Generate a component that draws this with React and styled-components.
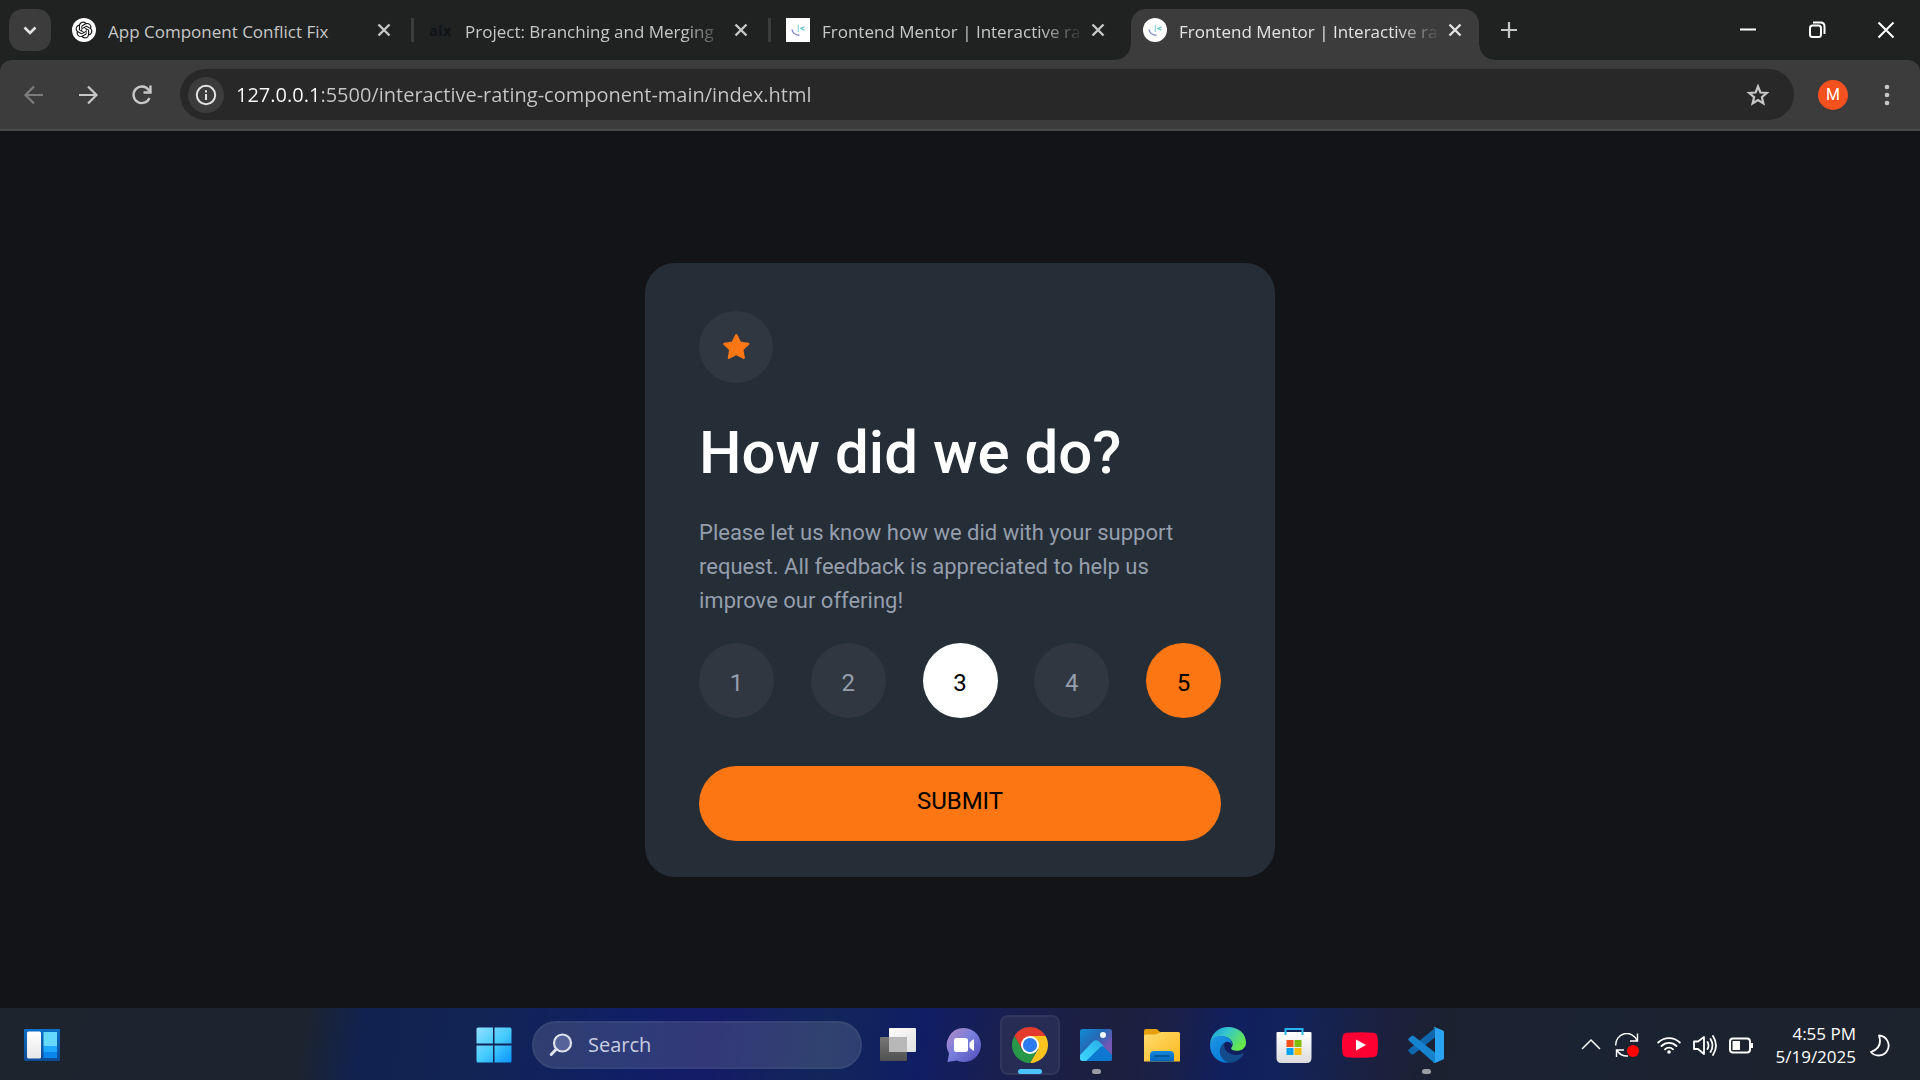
import React, { useState } from "react";
import styled, { createGlobalStyle, css } from "styled-components";

const uiFont = `"Open Sans", "Noto Sans", sans-serif`;
const cardFont = `Roboto, "Liberation Sans", sans-serif`;

const GlobalStyle = createGlobalStyle`
  *, *::before, *::after { box-sizing: border-box; }
  body { margin: 0; background: #121417; font-family: ${uiFont}; }
  button, input { font: inherit; }
  svg { display: block; flex: none; }
`;

const Screen = styled.div`
  display: flex;
  flex-direction: column;
  min-height: 100vh;
`;

/* ---------- browser chrome ---------- */

const TabStrip = styled.header`
  display: flex;
  align-items: center;
  height: 60px;
  padding-left: 9px;
  background: #202222;
  color: #c7c7c7;
`;

const BareButton = styled.button`
  display: grid;
  place-items: center;
  flex: none;
  width: ${(p) => p.$w}px;
  height: ${(p) => p.$h || p.$w}px;
  padding: 0;
  border: 0;
  border-radius: ${(p) => p.$round || 0}px;
  background: ${(p) => p.$bg || "transparent"};
  color: ${(p) => p.$color || "inherit"};
`;

const TabList = styled.div`
  display: flex;
  align-self: stretch;
  align-items: center;
  padding: 9px 0 0 9px;
  min-width: 0;
`;

const Tab = styled.div`
  position: relative;
  display: flex;
  align-items: center;
  gap: 12px;
  width: 348px;
  min-width: 0;
  height: 51px;
  padding: 0 12px 9px;
  border-radius: 15px 15px 0 0;
  color: #c7c7c7;
  ${(p) =>
    p.$active &&
    css`
      background: #3c3c3c;
      color: #e3e3e3;
      &::before,
      &::after {
        content: "";
        position: absolute;
        bottom: 0;
        width: 15px;
        height: 15px;
      }
      &::before {
        right: 100%;
        background: radial-gradient(circle at 0 0, transparent 14px, #3c3c3c 15px);
      }
      &::after {
        left: 100%;
        background: radial-gradient(circle at 100% 0, transparent 14px, #3c3c3c 15px);
      }
    `}
`;

const TabTitle = styled.button`
  flex: 1;
  min-width: 0;
  margin-right: -10px;
  padding: 4px 0 0;
  border: 0;
  background: none;
  color: inherit;
  font-size: 17px;
  line-height: 24px;
  text-align: left;
  white-space: nowrap;
  overflow: hidden;
  ${(p) => p.$faded && css`mask-image: linear-gradient(to right, #000 calc(100% - 44px), transparent);`}
`;

const Separator = styled.span`
  display: flex;
  justify-content: center;
  width: 9px;
  height: 24px;
  margin-bottom: 9px;
  &::before {
    content: "";
    width: 3px;
    background: ${(p) => (p.$hidden ? "transparent" : "#3c3c3c")};
  }
`;

const AlxMark = styled.span`
  width: 24px;
  color: #111417;
  font-size: 15px;
  font-weight: 700;
  line-height: 24px;
`;

const WindowControls = styled.div`
  display: flex;
  margin-left: auto;
  color: #fff;
`;

const ToolbarBack = styled.div`
  background: #202222;
`;

const Toolbar = styled.nav`
  display: flex;
  align-items: center;
  height: 71px;
  padding: 0 9px 0 7px;
  border-bottom: 2px solid #484848;
  border-radius: 12px 12px 0 0;
  background: #3c3c3c;
  color: #c7c7c7;
`;

const Omnibox = styled.label`
  display: flex;
  flex: 1;
  align-items: center;
  gap: 12px;
  height: 51px;
  margin: 0 9px 0 11px;
  padding: 0 18px 0 8px;
  border-radius: 26px;
  background: #282828;
`;

const Address = styled.input`
  flex: 1;
  min-width: 0;
  padding: 0;
  border: 0;
  outline: 0;
  background: linear-gradient(to right, #fff 83px, #c7c7c7 83px);
  background-clip: text;
  color: transparent;
  font-size: 20px;
  line-height: 30px;
`;

const Avatar = styled.span`
  display: grid;
  place-items: center;
  width: 30px;
  height: 30px;
  border-radius: 50%;
  background: #f4511e;
  color: #fff;
  font: 16px/30px Roboto, sans-serif;
`;

/* ---------- rating card ---------- */

const Page = styled.main`
  display: grid;
  flex: 1;
  place-items: center;
  padding: 24px;
`;

const Card = styled.form`
  width: 100%;
  max-width: 630px;
  padding: 48px 54px 36px;
  border-radius: 30px;
  background: #252d37;
  color: #959eac;
  font-family: ${cardFont};
  font-size: 22px;
`;

const StarBadge = styled.div`
  display: grid;
  place-items: center;
  width: 74px;
  height: 72px;
  border-radius: 50%;
  background: #313740;
`;

const Heading = styled.h1`
  margin: 34px 0 27px;
  color: #fff;
  font-size: 60px;
  font-weight: 500;
  line-height: 72px;
`;

const Message = styled.p`
  margin: 0;
  line-height: 34px;
`;

const Ratings = styled.fieldset`
  display: flex;
  justify-content: space-between;
  min-width: 0;
  margin: 25px 0 48px;
  padding: 0;
  border: 0;
`;

const Rating = styled.label`
  display: grid;
  place-items: center;
  width: 75px;
  height: 75px;
  padding-top: 5px;
  border-radius: 50%;
  background: #313740;
  color: #959eac;
  font-size: 24px;
  line-height: 30px;
  ${(p) => p.$hovered && css`background: #fff; color: #000;`}
  &:has(input:checked) {
    background: #fc7614;
    color: #000;
  }
`;

const HiddenRadio = styled.input`
  position: absolute;
  opacity: 0;
  pointer-events: none;
`;

const Submit = styled.button`
  width: 100%;
  height: 75px;
  padding: 0 0 5px;
  border: 0;
  border-radius: 38px;
  background: #fc7614;
  color: #000;
  font-size: 24px;
`;

/* ---------- taskbar ---------- */

const Taskbar = styled.footer`
  display: grid;
  grid-template-columns: 1fr auto 1fr;
  align-items: center;
  height: 72px;
  padding-top: 2px;
  background: linear-gradient(
    100deg,
    #1e242e 0%,
    #1c2430 16%,
    #112250 19%,
    #122454 25%,
    #101f66 33%,
    #151b66 37%,
    #12265a 43%,
    #101d64 48%,
    #191f50 52%,
    #1c203e 58%,
    #1a2048 61%,
    #101f5e 64%,
    #12235a 67%,
    #1a2142 71%,
    #1c2130 75%,
    #1a2332 82%,
    #1d232d 100%
  );
  color: #fff;
`;

const TaskStart = styled.div`
  padding: 0 24px;
`;

const TaskCenter = styled.div`
  display: flex;
  align-items: center;
`;

const TaskButton = styled.button`
  display: grid;
  place-items: center;
  width: 60px;
  height: 60px;
  margin: 0 3px;
  padding: 0;
  border: 2px solid ${(p) => (p.$active ? "#31365c" : "transparent")};
  border-radius: 8px;
  background: ${(p) => (p.$active ? "#272c54" : "transparent")};
  position: relative;
  &::after {
    content: "";
    position: absolute;
    bottom: -1px;
    width: ${(p) => (p.$active ? 24 : p.$open ? 9 : 0)}px;
    height: 5px;
    border-radius: 3px;
    background: ${(p) => (p.$active ? "#4cc2ff" : "#9a9ba3")};
  }
`;

const SearchBox = styled.label`
  display: flex;
  align-items: center;
  gap: 15px;
  width: 330px;
  height: 48px;
  margin: 0 3px 0 5px;
  padding: 0 15px;
  border: 2px solid rgba(255, 255, 255, 0.04);
  border-radius: 24px;
  background: rgba(255, 255, 255, 0.13);
`;

const SearchInput = styled.input`
  flex: 1;
  min-width: 0;
  padding: 0;
  border: 0;
  outline: 0;
  background: none;
  color: #fff;
  font-size: 20px;
  line-height: 30px;
  &::placeholder {
    color: #c9cde0;
    opacity: 1;
  }
`;

const Tray = styled.div`
  display: flex;
  align-items: center;
  justify-content: flex-end;
  gap: 12px;
  padding-right: 28px;
`;

const TrayGap = styled.span`
  display: flex;
  padding-right: 6px;
`;

const Clock = styled.time`
  width: 91px;
  font-size: 17px;
  line-height: 23px;
  text-align: right;
  white-space: nowrap;
`;

/* ---------- drawings ---------- */

const Line = ({ size = 24, box = 24, w = 2, children, cap = "butt" }) => (
  <svg width={size} height={size} viewBox={`0 0 ${box} ${box}`} fill="none" stroke="currentColor" strokeWidth={w} strokeLinecap={cap} aria-hidden="true">
    {children}
  </svg>
);

const CloseMark = () => (
  <Line w={2.4}><path d="M6.5 6.5 17.5 17.5M17.5 6.5 6.5 17.5" /></Line>
);

const OpenAiIcon = () => (
  <svg width="24" height="24" viewBox="0 0 24 24" aria-hidden="true">
    <circle cx="12" cy="12" r="12" fill="#fff" />
    <g transform="translate(3.6 3.6) scale(.7)">
      <path fill="#111" d="M22.2819 9.8211a5.9847 5.9847 0 0 0-.5157-4.9108 6.0462 6.0462 0 0 0-6.5098-2.9A6.0651 6.0651 0 0 0 4.9807 4.1818a5.9847 5.9847 0 0 0-3.9977 2.9 6.0462 6.0462 0 0 0 .7427 7.0966 5.98 5.98 0 0 0 .511 4.9107 6.051 6.051 0 0 0 6.5146 2.9001A5.9847 5.9847 0 0 0 13.2599 24a6.0557 6.0557 0 0 0 5.7718-4.2058 5.9894 5.9894 0 0 0 3.9977-2.9001 6.0557 6.0557 0 0 0-.7475-7.073zm-9.022 12.6081a4.4755 4.4755 0 0 1-2.8764-1.0408l.1419-.0804 4.7783-2.7582a.7948.7948 0 0 0 .3927-.6813v-6.7369l2.02 1.1686a.071.071 0 0 1 .038.052v5.5826a4.504 4.504 0 0 1-4.4945 4.4944zm-9.6607-4.1254a4.4708 4.4708 0 0 1-.5346-3.0137l.142.0852 4.783 2.7582a.7712.7712 0 0 0 .7806 0l5.8428-3.3685v2.3324a.0804.0804 0 0 1-.0332.0615L9.74 19.9502a4.4992 4.4992 0 0 1-6.1408-1.6464zM2.3408 7.8956a4.485 4.485 0 0 1 2.3655-1.9728V11.6a.7664.7664 0 0 0 .3879.6765l5.8144 3.3543-2.0201 1.1685a.0757.0757 0 0 1-.071 0l-4.8303-2.7865A4.504 4.504 0 0 1 2.3408 7.872zm16.5963 3.8558L13.1038 8.364 15.1192 7.2a.0757.0757 0 0 1 .071 0l4.8303 2.7913a4.4944 4.4944 0 0 1-.6765 8.1042v-5.6772a.79.79 0 0 0-.407-.667zm2.0107-3.0231l-.142-.0852-4.7735-2.7818a.7759.7759 0 0 0-.7854 0L9.409 9.2297V6.8974a.0662.0662 0 0 1 .0284-.0615l4.8303-2.7866a4.4992 4.4992 0 0 1 6.6802 4.66zM8.3065 12.863l-2.02-1.1638a.0804.0804 0 0 1-.038-.0567V6.0742a4.4992 4.4992 0 0 1 7.3757-3.4537l-.142.0805L8.704 5.459a.7948.7948 0 0 0-.3927.6813zm1.0976-2.3654l2.602-1.4998 2.6069 1.4998v2.9994l-2.5974 1.4997-2.6067-1.4997Z" />
    </g>
  </svg>
);

const MentorIcon = ({ round }) => (
  <svg width="24" height="24" viewBox="0 0 24 24" fill="none" aria-hidden="true">
    <rect width="24" height="24" rx={round ? 12 : 0} fill="#fff" />
    <path d="M6 11.5c.5 3 3.5 5.5 7.5 5.8" stroke="#7b87c9" strokeWidth="1.4" />
    <path d="M12.3 7v7" stroke="#8fd3dc" strokeWidth="1.2" />
    <path d="m18.5 8.7-3.6 1.8 3.6 1.8" stroke="#5cc0d0" strokeWidth="1.2" />
  </svg>
);

const WidgetsIcon = () => (
  <svg width="36" height="32" viewBox="0 0 36 32" aria-hidden="true">
    <defs>
      <linearGradient id="wdg" x2="0" y2="1"><stop stopColor="#0a70c8" /><stop offset="1" stopColor="#0d4b94" /></linearGradient>
      <linearGradient id="wdw" x2="0" y2="1"><stop stopColor="#fff" /><stop offset="1" stopColor="#e6e6e8" /></linearGradient>
    </defs>
    <rect width="36" height="32" rx="1" fill="url(#wdg)" />
    <rect x="3" y="2.500" width="14" height="27" rx="1.500" fill="url(#wdw)" />
    <path fill="#66d9ff" d="M19.500 3H33v14H19.500z" />
    <path fill="#1ea8ff" d="M19.500 17H33v6H19.500z" />
    <path fill="#0a86ee" d="M19.500 23H33v6H19.500z" />
  </svg>
);

const WindowsIcon = () => (
  <svg width="36" height="36" viewBox="0 0 36 36" aria-hidden="true">
    <defs><linearGradient id="win" x2="1" y2="1"><stop stopColor="#8fe0ff" /><stop offset=".5" stopColor="#48ccff" /><stop offset="1" stopColor="#0a94fb" /></linearGradient></defs>
    <path fill="url(#win)" d="M2 .5h15v16H.5V2A1.500 1.500 0 0 1 2 .5zM18.500.5H34A1.500 1.500 0 0 1 35.500 2v14.500h-17zM.5 18.500H17v17H2A1.500 1.500 0 0 1 .5 34zM18.500 18.500h17V34a1.500 1.500 0 0 1-1.500 1.500H18.500z" />
  </svg>
);

const TaskViewIcon = () => (
  <svg width="36" height="36" viewBox="0 0 36 36" aria-hidden="true">
    <defs>
      <linearGradient id="tvf" x2="1" y2="1"><stop stopColor="#fff" /><stop offset="1" stopColor="#e0e0e0" /></linearGradient>
      <linearGradient id="tvb" x2="0" y2="1"><stop stopColor="#777" /><stop offset="1" stopColor="#505050" /></linearGradient>
    </defs>
    <rect y="10" width="27" height="24" rx="1" fill="url(#tvb)" />
    <rect x="9" y="1" width="27" height="24" rx="1" fill="url(#tvf)" />
    <path fill="#b8b8b8" d="M9 10h18v15H9z" />
  </svg>
);

const ChatIcon = () => (
  <svg width="36" height="36" viewBox="0 0 36 36" aria-hidden="true">
    <defs><linearGradient id="cht" x2="1" y2="1"><stop stopColor="#b48ac0" /><stop offset=".45" stopColor="#7a7fdd" /><stop offset="1" stopColor="#4f4bb8" /></linearGradient></defs>
    <path fill="url(#cht)" d="M18 1a17 17 0 1 1-7 32.500L1.500 35 3 26.500A17 17 0 0 1 18 1z" />
    <rect x="8" y="11" width="14" height="14" rx="2.500" fill="#fff" />
    <path fill="#fff" d="m23.500 15.500 3.500-3q1-.6 1 .8v9.400q0 1.400-1 .8l-3.500-3z" />
  </svg>
);

const ChromeIcon = () => (
  <svg width="36" height="36" viewBox="0 0 48 48" aria-hidden="true">
    <path fill="#e33b2e" d="M24 12h20.780A24 24 0 0 0 3.220 12l10.390 18z" />
    <path fill="#fcc31e" d="M34.390 30 24 48A24 24 0 0 0 44.780 12H24z" />
    <path fill="#279847" d="M13.610 30 3.220 12A24 24 0 0 0 24 48l10.390-18z" />
    <circle cx="24" cy="24" r="12" fill="#fff" />
    <circle cx="24" cy="24" r="9.500" fill="#2a7cf0" />
  </svg>
);

const PhotosIcon = () => (
  <svg width="32" height="32" viewBox="0 0 32 32" aria-hidden="true">
    <defs>
      <linearGradient id="phb" x2="1" y2="1"><stop stopColor="#118bd6" /><stop offset=".4" stopColor="#2569b5" /><stop offset=".7" stopColor="#7658b5" /></linearGradient>
      <linearGradient id="phm" x1="1" y1="0" x2="0" y2="1"><stop stopColor="#27aee8" /><stop offset="1" stopColor="#40d7ff" /></linearGradient>
      <clipPath id="phc"><rect width="32" height="32" rx="2.500" /></clipPath>
    </defs>
    <g clipPath="url(#phc)">
      <path fill="url(#phb)" d="M0 0h32v32H0z" />
      <path fill="#0c78d0" d="m22 16 12 12v6H2z" />
      <path fill="url(#phm)" d="M0 26 13 12.500q3-2.500 6 0l5 5q-2-.6-4 1L6 32q-3 1-6-1z" />
      <circle cx="23" cy="6" r="3" fill="#f4fbff" />
    </g>
  </svg>
);

const FolderIcon = () => (
  <svg width="36" height="36" viewBox="0 0 36 36" aria-hidden="true">
    <defs>
      <linearGradient id="fol" x2="1" y2="1"><stop stopColor="#ffdb70" /><stop offset="1" stopColor="#fbb91c" /></linearGradient>
      <linearGradient id="fob" x2="0" y2="1"><stop stopColor="#1389df" /><stop offset="1" stopColor="#0565b8" /></linearGradient>
    </defs>
    <path fill="#e5a00c" d="M0 4q0-2 2-2h10q1.500 0 3 2l2 2H36v8H0z" />
    <path fill="url(#fol)" d="M0 9q0-1.500 1.500-1.500H11Q12.500 7.500 14 6.500T17 5h17.500Q36 5 36 6.500V34.500H0z" />
    <path fill="url(#fob)" d="M6 34.500V28q0-4 4-4h16q4 0 4 4v6.500z" />
    <path stroke="#07569c" strokeWidth="2" strokeLinecap="round" d="M11 29h14" />
  </svg>
);

const EdgeIcon = () => (
  <svg width="36" height="36" viewBox="0 0 36 36" aria-hidden="true">
    <defs>
      <linearGradient id="edt" x2="1" y2=".5"><stop stopColor="#1796d5" /><stop offset=".45" stopColor="#35c5cf" /><stop offset="1" stopColor="#66e84b" /></linearGradient>
      <linearGradient id="edb" x2=".6" y2="1"><stop stopColor="#1d97e5" /><stop offset="1" stopColor="#087bd6" /></linearGradient>
    </defs>
    <path fill="url(#edt)" d="M0 17C1 6 9 0 18 0c11 0 18 7 18 15.500 0 6-5 8.700-10 8.300-4-.3-5.500-2-4.500-3.300 2.500-3 1-7.500-4-10C11 7.500 3 9.500 0 17z" />
    <path fill="url(#edb)" d="M0 18C.5 12 6 8.500 12 9c6.500.6 10 4 10 9-1-3-4-4-6.500-3-7 4-7 16 3.500 20.500C8 37 0 28 0 18z" />
    <path fill="#144b8c" d="M14.500 15.700C7 20 8.500 33.500 20 35.800c5.500-.5 10.500-3.500 13.700-8.500.5-.9-.2-1.200-1-.8-9 4-20.500-1-18.200-10.800z" />
  </svg>
);

const StoreIcon = () => (
  <svg width="36" height="36" viewBox="0 0 36 36" aria-hidden="true">
    <defs><linearGradient id="sto" x2="0" y2="1"><stop stopColor="#fff" /><stop offset="1" stopColor="#dcdcde" /></linearGradient></defs>
    <path fill="url(#sto)" d="M.5 6q0-1 1-1h33q1 0 1 1v25q0 5-5 5h-25q-5 0-5-5z" />
    <path fill="none" stroke="#2db3ee" strokeWidth="2" d="M9.500 8V2h17v6" />
    <path fill="#f1511b" d="M10.500 13h7v7h-7z" /><path fill="#80bc06" d="M18.500 13h7v7h-7z" />
    <path fill="#00a3f0" d="M10.500 21h7v7h-7z" /><path fill="#fbbc09" d="M18.500 21h7v7h-7z" />
  </svg>
);

const YoutubeIcon = () => (
  <svg width="36" height="26" viewBox="0 0 36 26" aria-hidden="true">
    <path fill="#ff0033" d="M5 .8q13-1.200 26 0 4 .4 4.500 4 .9 8.200 0 16.400-.5 3.600-4.500 4-13 1.200-26 0-4-.4-4.500-4-.9-8.200 0-16.400Q1 1.200 5 .8z" />
    <path fill="#fff" d="m14 7.500 10 5.500-10 5.500z" />
  </svg>
);

const CodeIcon = () => (
  <svg width="36" height="36" viewBox="0 0 36 36" aria-hidden="true">
    <path fill="#0f67ad" d="m.6 24.500 2.800 2.700q1 .8 2.200 0L27 10.500V1L.7 22.500q-1 1 0 2z" />
    <path fill="#1583cd" d="M.7 11.500 3.500 9q1-.8 2.200 0L27 25.500v9.800q-.8.600-1.800-.3L.7 13.500q-1-1 0-2z" />
    <path fill="#29a3f2" d="M27 .2 35 3.500q1 .5 1 1.600v25.800q0 1.100-1 1.600l-8 3.400q-1.200.3-2-.4 2 .3 2-1.500V2q0-1.800-2-1.500.8-.7 2-.3z" />
  </svg>
);

/* ---------- screen ---------- */

const tabs = [
  { title: "App Component Conflict Fix", icon: <OpenAiIcon /> },
  { title: "Project: Branching and Merging", icon: <AlxMark aria-hidden="true">alx</AlxMark>, faded: true },
  { title: "Frontend Mentor | Interactive ra", icon: <MentorIcon />, faded: true },
  { title: "Frontend Mentor | Interactive ra", icon: <MentorIcon round />, faded: true, active: true },
];

const apps = [
  { name: "Task view", icon: <TaskViewIcon /> },
  { name: "Chat", icon: <ChatIcon /> },
  { name: "Google Chrome", icon: <ChromeIcon />, active: true },
  { name: "Photos", icon: <PhotosIcon />, open: true },
  { name: "File Explorer", icon: <FolderIcon /> },
  { name: "Microsoft Edge", icon: <EdgeIcon /> },
  { name: "Microsoft Store", icon: <StoreIcon /> },
  { name: "YouTube", icon: <YoutubeIcon /> },
  { name: "Visual Studio Code", icon: <CodeIcon />, open: true },
];

function Browser() {
  return (
    <>
      <TabStrip>
        <BareButton $w={42} $round={14} $bg="#3c3c3c" $color="#e3e3e3" aria-label="Search tabs">
          <Line w={2.6}><path d="m6.500 9.500 5.500 5.500 5.500-5.500" /></Line>
        </BareButton>
        <TabList>
          {tabs.map((tab, i) => (
            <React.Fragment key={i}>
              {i > 0 && <Separator $hidden={tab.active} />}
              <Tab $active={tab.active}>
                {tab.icon}
                <TabTitle $faded={tab.faded}>{tab.title}</TabTitle>
                <BareButton $w={24} aria-label="Close tab"><CloseMark /></BareButton>
              </Tab>
            </React.Fragment>
          ))}
        </TabList>
        <BareButton $w={60} aria-label="New tab">
          <Line w={2.200}><path d="M12 4v16M4 12h16" /></Line>
        </BareButton>
        <WindowControls>
          <BareButton $w={69} $h={60} aria-label="Minimize"><Line><path d="M4 11.500h16" /></Line></BareButton>
          <BareButton $w={69} $h={60} aria-label="Restore">
            <Line><rect x="5" y="7.500" width="11" height="11.500" rx="2.500" /><path d="M8 4.500h7.500q4 0 4 4V16" /></Line>
          </BareButton>
          <BareButton $w={69} $h={60} aria-label="Close"><Line><path d="m4.500 4.500 15 15m0-15-15 15" /></Line></BareButton>
        </WindowControls>
      </TabStrip>
      <ToolbarBack>
        <Toolbar>
          <BareButton $w={54} $color="#7c7c7c" aria-label="Back">
            <Line w={2.2}><path d="M21 12H4.500M12 3.500 3.500 12l8.500 8.500" /></Line>
          </BareButton>
          <BareButton $w={54} aria-label="Forward">
            <Line w={2.2}><path d="M3 12h16.500M12 3.500l8.500 8.500-8.500 8.500" /></Line>
          </BareButton>
          <BareButton $w={54} aria-label="Reload">
            <Line w={2.4}><path d="M19.500 15A8.300 8.300 0 1 1 18.500 6.800l1.500 1.700M20.500 2.500v7H13.500" /></Line>
          </BareButton>
          <Omnibox>
            <BareButton $w={36} $round={18} $bg="#3c3c3c" $color="#e3e3e3" aria-label="Site information">
              <Line><circle cx="12" cy="12" r="9.200" /><path d="M12 11v6M12 7.200v2.200" /></Line>
            </BareButton>
            <Address aria-label="Address" defaultValue="127.0.0.1:5500/interactive-rating-component-main/index.html" />
            <BareButton $w={36} aria-label="Bookmark this page">
              <Line w={2.2}><path d="m12 3.500 2.400 6 6.400.5-4.900 4.200 1.500 6.300L12 17.100l-5.400 3.400 1.500-6.300L3.200 10l6.400-.5z" /></Line>
            </BareButton>
          </Omnibox>
          <BareButton $w={60} aria-label="Profile"><Avatar>M</Avatar></BareButton>
          <BareButton $w={48} aria-label="Menu">
            <svg width="24" height="24" fill="currentColor" aria-hidden="true"><circle cx="12" cy="4" r="2.300" /><circle cx="12" cy="12" r="2.300" /><circle cx="12" cy="20" r="2.300" /></svg>
          </BareButton>
        </Toolbar>
      </ToolbarBack>
    </>
  );
}

function RatingCard() {
  const [score, setScore] = useState(5);
  return (
    <Card onSubmit={(e) => e.preventDefault()}>
      <StarBadge>
        <svg width="27" height="25" viewBox="0 0 17 16" aria-hidden="true">
          <path fill="#fc7614" d="m9.067.43 1.990 4.031c.112.228.330.386.580.422l4.450.647a.772.772 0 0 1 .427 1.316l-3.220 3.138a.773.773 0 0 0-.222.683l.760 4.431a.772.772 0 0 1-1.120.813l-3.980-2.092a.773.773 0 0 0-.718 0l-3.980 2.092a.772.772 0 0 1-1.119-.813l.760-4.431a.77.77 0 0 0-.222-.683L.233 6.846A.772.772 0 0 1 .661 5.530l4.449-.647a.772.772 0 0 0 .580-.422L7.680.430a.774.774 0 0 1 1.387 0z" />
        </svg>
      </StarBadge>
      <Heading>How did we do?</Heading>
      <Message>
        Please let us know how we did with your support request. All feedback is appreciated to help us improve our offering!
      </Message>
      <Ratings aria-label="Rating">
        {[1, 2, 3, 4, 5].map((n) => (
          <Rating key={n} $hovered={n === 3}>
            <HiddenRadio type="radio" name="rating" value={n} checked={score === n} onChange={() => setScore(n)} />
            {n}
          </Rating>
        ))}
      </Ratings>
      <Submit type="submit">SUBMIT</Submit>
    </Card>
  );
}

function WindowsTaskbar() {
  return (
    <Taskbar>
      <TaskStart>
        <BareButton $w={36} aria-label="Widgets"><WidgetsIcon /></BareButton>
      </TaskStart>
      <TaskCenter>
        <TaskButton aria-label="Start"><WindowsIcon /></TaskButton>
        <SearchBox>
          <svg width="24" height="24" viewBox="0 0 24 24" aria-hidden="true">
            <circle cx="13.500" cy="10" r="8.500" fill="#56629a" stroke="#dfe3ee" strokeWidth="2.200" />
            <path stroke="#dfe3ee" strokeWidth="3" strokeLinecap="round" d="m7 16.500-4.800 5" />
          </svg>
          <SearchInput type="search" placeholder="Search" aria-label="Search" />
        </SearchBox>
        {apps.map((app) => (
          <TaskButton key={app.name} $active={app.active} $open={app.open} aria-label={app.name}>{app.icon}</TaskButton>
        ))}
      </TaskCenter>
      <Tray>
        <Line w={1.500}><path d="m3 16 9-9 9 9" /></Line>
        <TrayGap>
          <Line w={1.400}>
            <path d="M.8 12.500A11 11 0 0 1 22 7.500M22.500.5V8H15M1.500 24v-7H9M2 17.500q4 6 11 5.500" />
            <circle cx="18" cy="18" r="6" fill="#f00" stroke="none" />
          </Line>
        </TrayGap>
        <Line w={1.800} cap="round">
          <path d="M1.200 9.500a15.300 15.300 0 0 1 21.600 0M4.500 13a10.500 10.500 0 0 1 15 0M8 16.300a5.600 5.600 0 0 1 8 0" />
          <circle cx="12" cy="19" r="1.800" fill="currentColor" stroke="none" />
        </Line>
        <Line w={1.800} cap="round">
          <path strokeLinejoin="round" d="M1 8.500h4L11 4v17l-6-5H1z" />
          <path d="M14.500 9q2 3.500 0 7M17.500 6q4 6.500 0 13M20 3q6 9.500 0 19" />
        </Line>
        <Line w={2}>
          <rect x="1" y="5.500" width="20" height="14" rx="3" />
          <path fill="currentColor" stroke="none" d="M3.500 8H11v9H3.500zM22 10h2v5h-2z" />
        </Line>
        <Clock dateTime="2025-05-19T16:55">4:55 PM<br />5/19/2025</Clock>
        <Line w={1.800}><path strokeLinejoin="round" d="M11 2.500A10 10 0 1 1 3 19q12-4 8-16.500z" /></Line>
      </Tray>
    </Taskbar>
  );
}

export default function App() {
  return (
    <Screen>
      <GlobalStyle />
      <Browser />
      <Page><RatingCard /></Page>
      <WindowsTaskbar />
    </Screen>
  );
}
